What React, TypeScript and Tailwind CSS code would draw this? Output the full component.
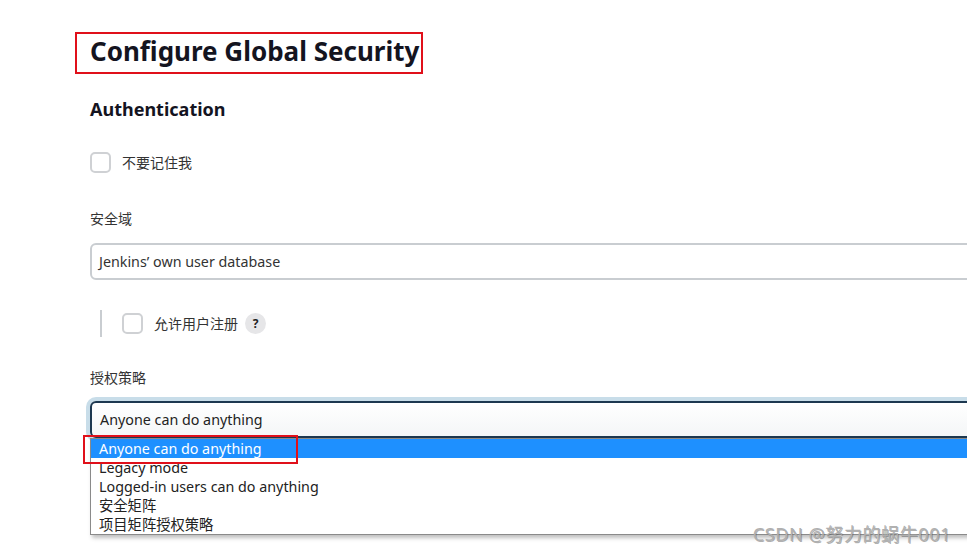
import React from 'react';

const font = { fontFamily: '"Noto Sans", "Noto Sans CJK SC", sans-serif' };

const Checkbox: React.FC = () => (
  <div className="w-[21px] h-[21px] rounded-[5px] border-2 border-[#cfd1d4] bg-white shrink-0" />
);

export default function App() {
  const options = ['Anyone can do anything', 'Legacy mode', 'Logged-in users can do anything', '安全矩阵', '项目矩阵授权策略'];

  return (
    <div className="relative w-[967px] h-[556px] overflow-hidden bg-white text-[#14141f]" style={font}>
      <div className="w-[1200px]">
        {/* Title, boxed in red */}
        <div className="ml-[75px] mt-[32px] w-[348px] h-[42px] border-2 border-[#e0101a]">
          <h1 className="pl-[13px] pt-[1px] whitespace-nowrap text-[26px] font-bold leading-[32px]">Configure Global Security</h1>
        </div>

        <div className="pl-[90px]">
          <h2 className="mt-[23px] h-[24px] leading-[24px] text-[18px] font-bold">Authentication</h2>

          <div className="mt-[31px] flex items-center gap-[11px]">
            <Checkbox />
            <span className="text-[14px] text-[#333]">不要记住我</span>
          </div>

          <div className="mt-[36px] h-[20px] leading-[20px] text-[14px] text-[#333]">安全域</div>

          <div className="mt-[14px] h-[37px] w-[1000px] rounded-[6px] border-2 border-[#c9cdd1] flex items-center pl-[7px] text-[14.3px] text-[#333]">
            Jenkins’ own user database
          </div>

          <div className="mt-[30px] flex items-center h-[27px] pl-[10px]">
            <div className="w-[2px] h-[27px] bg-[#c9cdd1]" />
            <div className="ml-[20px] flex items-center">
              <Checkbox />
              <span className="ml-[11px] text-[14px] text-[#333]">允许用户注册</span>
              <span className="ml-[7px] w-[21px] h-[21px] rounded-full bg-[#e6e6e8] flex items-center justify-center text-[12px] font-bold text-[#222]">
                ?
              </span>
            </div>
          </div>

          <div className="mt-[31px] h-[20px] leading-[20px] text-[14px] text-[#333]">授权策略</div>

          <div className="relative mt-[13px] w-[1000px]">
            <div className="h-[37px] rounded-[6px] border-2 border-[#1d3850] shadow-[0_0_0_4px_#c8dde9] bg-gradient-to-b from-white to-[#f4f6f7] flex items-center pl-[8px] text-[14.3px] text-[#222]">
              Anyone can do anything
            </div>

            {/* open option list */}
            <div className="absolute left-0 top-[37px] w-[1000px] border border-[#8a8a8a] bg-white shadow-[2px_3px_4px_rgba(0,0,0,0.25)] text-[14.3px] text-[#222]">
              {options.map((o, i) => (
                <div
                  key={o}
                  className={`h-[19px] leading-[19px] pl-[8px] ${i === 0 ? 'bg-[#1e90ff] text-white' : ''}`}
                >
                  {o}
                </div>
              ))}
            </div>

            {/* red annotation box around the selected option */}
            <div className="absolute left-[-7px] top-[34px] w-[215px] h-[29px] border-2 border-[#e0101a]" />
          </div>
        </div>
      </div>

      <div
        className="absolute right-[16px] bottom-[8px] text-[18px] font-normal text-[#b0b0b0] tracking-[0.6px]"
        style={{ textShadow: '1px 1px 0 rgba(80,80,80,0.45)' }}
      >
        CSDN @努力的蜗牛001
      </div>
    </div>
  );
}
